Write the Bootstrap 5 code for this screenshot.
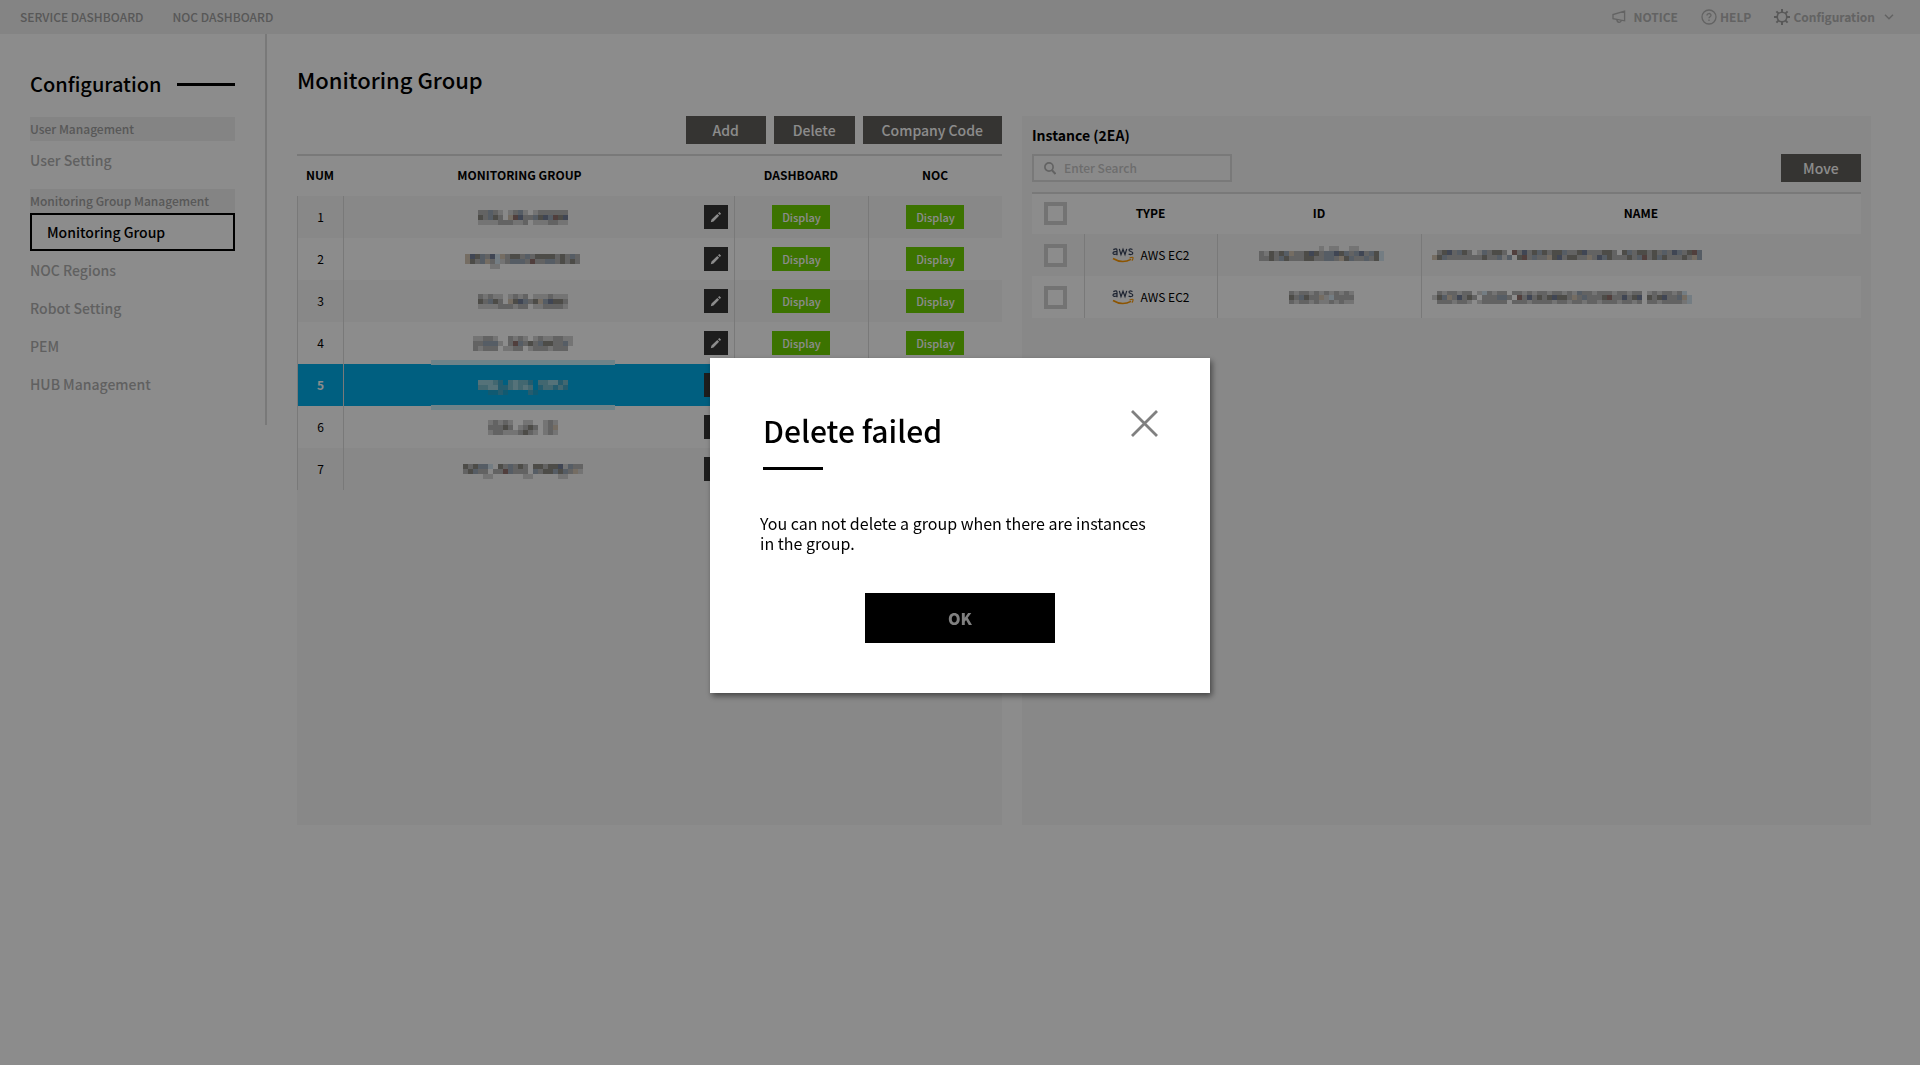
<!DOCTYPE html>
<html lang="en">
<head>
<meta charset="utf-8">
<meta name="viewport" content="width=device-width, initial-scale=1">
<title>Monitoring Group</title>
<link href="https://cdn.jsdelivr.net/npm/bootstrap@5.3.0/dist/css/bootstrap.min.css" rel="stylesheet">
<style>
body{font-family:"Noto Sans CJK KR","Noto Sans",sans-serif;font-size:14px;line-height:20px;font-weight:500;color:#000;background:#fff}
button,input{font-family:inherit}
.topbar{height:34px;background:#f0f0f0;padding:0 26px 0 20px}
.topbar nav{gap:29px}
.topbar a,.topbar button{font-size:12px;line-height:20px;color:#a0a0a0;text-decoration:none;background:none;border:0;padding:0}
.topbar .tools{gap:23px}
.topbar .tools a,.topbar .tools button{color:#b4b4b4;font-weight:700;gap:3px}
.topbar .chevron{margin-left:6px}
.side{flex:0 0 267px;border-right:2px solid #dcdcdc;padding:33px 30px 22px}
.side-title{font-size:20px;line-height:34px;font-weight:500;margin:0}
.side-top{margin-bottom:16px}
.side-rule{height:3px;background:#000;margin-left:15px}
.side-head{font-size:12px;line-height:24px;height:24px;background:#f0f0f0;color:#a0a0a0}
.side-head + .side-link:not(.current){margin-bottom:10px}
.side-link{display:block;height:38px;line-height:38px;font-size:14px;color:#b0b0b0;text-decoration:none}
.side-link.current{border:2px solid #000;line-height:34px;padding-left:15px;color:#000}
.main{padding:28px 49px 0 30px;min-width:0}
.main h1{font-size:22px;line-height:34px;font-weight:500;margin:0 0 20px}
.panes{gap:20px}
.pane-l{flex:0 0 calc((100% - 20px)*.4537)}
.pane-r{flex:1 1 0;min-width:0;background:#f7f7f7;padding:9px 10px 0 10px}
.tool-row{margin-bottom:10px}
.tool-btn{height:28px;min-width:80px;padding:0 19px;border:0;border-radius:0;background:#625f5b;color:#fff;font-size:14px;line-height:28px;font-weight:500}
.fill{background:#f7f7f7;height:671px;border-top:2px solid #dcdcdc}
.grid{width:100%;table-layout:fixed;border-collapse:separate;border-spacing:0}
.grid th{height:40px;padding:0 0 2px;background:#fff;font-size:12px;font-weight:700;text-align:center}
.grid td{height:42px;padding:0;background:#fff;border-left:1px solid #dcdcdc;text-align:center;font-size:12px;font-weight:400}
.grid td.edit-cell{border-left:0}
.grid tbody tr:nth-child(odd) td{background:#f7f7f7}
.grid tbody tr.picked td{background:#00ade9;color:#fff;font-weight:700}
.c-num{width:46px}.c-edit{width:38px}.c-show{width:134px}
.c-tick{width:52px}.c-type{width:133px}.c-id{width:204px}
.list-r{border-top:2px solid #dcdcdc}
.list-r td:first-child{border-left:0}
.list-r td > svg{display:block}
.grid td.value-cell{padding-left:10px}
.grid td.id-cell{padding-left:4px}
.name-box{width:184px;height:42px;margin-left:6px}
.picked .name-box{position:relative}
.picked .name-box::before,.picked .name-box::after{content:"";position:absolute;left:0;width:184px;height:5px;background:#c8eefa}
.picked .name-box::before{top:-4px}
.picked .name-box::after{bottom:-4px}
.edit-btn{width:24px;height:24px;border:0;padding:0;background:#363636;margin-left:8px;display:flex;align-items:center;justify-content:center}
.show-btn{width:58px;height:24px;border:0;padding:0;background:#6dd100;color:#fff;font-size:11px;line-height:24px;font-weight:500;display:block;margin:0 auto}
.pane-r h2{font-size:14px;line-height:20px;font-weight:700;margin:0 0 9px}
.search-box{width:200px;height:28px;border:2px solid #dcdcdc;background:#fcfcfc;padding-left:10px}
.search-box input{border:0;background:none;outline:0;font-size:12px;font-weight:500;min-width:0;padding:0}
.search-box input::placeholder{color:#c6c6c6;opacity:1}
.tick{appearance:none;width:23px;height:23px;border:4px solid #d2d2d2;background:#fff;margin:0 0 0 12px;display:block}
.type-cell{gap:6px}
.modal{--bs-modal-margin:0px;--bs-modal-width:500px;padding-bottom:14px}
.modal-backdrop{--bs-backdrop-opacity:.45}
.modal-content{border:0;border-radius:0;padding:49px 50px 50px;color:#000;box-shadow:2px 3px 6px rgba(0,0,0,.5)}
.modal-title{font-size:30px;line-height:46px;font-weight:500;margin-left:3px}
.title-rule{width:60px;height:3px;background:#000;margin:14px 0 0 3px}
.modal p{font-size:16px;line-height:20px;font-weight:400;margin:43px 0 40px}
.close-btn{border:0;background:none;padding:0;margin:3px 2px 0 0;line-height:0}
.ok-btn{width:190px;height:50px;border:0;background:#000;color:#808080;font-size:16px;font-weight:900}
</style>
</head>
<body>
<header class="topbar d-flex align-items-center justify-content-between">
  <nav class="d-flex"><a href="#">SERVICE DASHBOARD</a><a href="#">NOC DASHBOARD</a></nav>
  <div class="tools d-flex align-items-center">
    <a href="#" class="d-flex align-items-center"><svg class="me-1" width="14" height="14" viewBox="0 0 14 14" fill="none" stroke="#b4b4b4" stroke-width="1.3"><path d="M12.600 1.200v9.600L1 8.600V4.600zM4.800 9.400c.2 3.600 4.200 3.800 4.400.8"/></svg>NOTICE</a>
    <a href="#" class="d-flex align-items-center"><svg width="16" height="16" viewBox="0 0 16 16" fill="none" stroke="#b4b4b4" stroke-width="1.3"><circle cx="8" cy="8" r="7"/><path d="M6 6.500c0-2.600 4-2.600 4-.2 0 1.500-2 1.500-2 3M8 10.500v1.400"/></svg><span>HELP</span></a>
    <button type="button" class="d-flex align-items-center"><svg width="16" height="16" viewBox="0 0 16 16" fill="none" stroke="#a0a0a0"><circle cx="8" cy="8" r="4.800" stroke-width="1.600"/><path stroke-width="2" d="M8 0v3M8 13v3M0 8h3M13 8h3M2.400 2.400l2 2M11.600 11.600l2 2M13.600 2.400l-2 2M4.400 11.600l-2 2"/></svg>Configuration<svg class="chevron" width="10" height="6" viewBox="0 0 10 6" fill="none" stroke="#b4b4b4" stroke-width="1.500"><path d="M1 .7l4 4 4-4"/></svg></button>
  </div>
</header>
<div class="d-flex align-items-start">
  <aside class="side">
    <div class="side-top d-flex align-items-center"><h2 class="side-title">Configuration</h2><div class="side-rule flex-grow-1"></div></div>
    <div class="side-head">User Management</div>
    <a class="side-link" href="#">User Setting</a>
    <div class="side-head">Monitoring Group Management</div>
    <a class="side-link current" href="#" aria-current="page">Monitoring Group</a>
    <a class="side-link" href="#">NOC Regions</a>
    <a class="side-link" href="#">Robot Setting</a>
    <a class="side-link" href="#">PEM</a>
    <a class="side-link" href="#">HUB Management</a>
  </aside>
  <main class="main flex-grow-1">
    <h1>Monitoring Group</h1>
    <div class="panes d-flex">
      <section class="pane-l">
        <div class="tool-row d-flex justify-content-end gap-2">
          <button type="button" class="tool-btn">Add</button>
          <button type="button" class="tool-btn">Delete</button>
          <button type="button" class="tool-btn">Company Code</button>
        </div>
        <div class="fill">
          <table class="grid">
            <colgroup><col class="c-num"><col><col class="c-edit"><col class="c-show"><col class="c-show"></colgroup>
            <thead><tr><th>NUM</th><th>MONITORING GROUP</th><th></th><th>DASHBOARD</th><th>NOC</th></tr></thead>
            <tbody id="groups"></tbody>
          </table>
        </div>
      </section>
      <section class="pane-r">
        <h2>Instance (2EA)</h2>
        <div class="tool-row d-flex justify-content-between">
          <label class="search-box d-flex align-items-center"><svg class="flex-shrink-0 me-2" width="12" height="13" viewBox="0 0 12 13" fill="none" stroke="#b4b4b4" stroke-width="1.700"><circle cx="5" cy="5" r="4.100"/><path d="M8 8.300l3.500 3.700" stroke-width="2"/></svg><input type="search" placeholder="Enter Search" aria-label="Enter Search"></label>
          <button type="button" class="tool-btn">Move</button>
        </div>
        <div class="list-r">
        <table class="grid">
          <colgroup><col class="c-tick"><col class="c-type"><col class="c-id"><col></colgroup>
          <thead><tr><th><input type="checkbox" class="tick" aria-label="Select all"></th><th>TYPE</th><th>ID</th><th>NAME</th></tr></thead>
          <tbody id="instances"></tbody>
        </table>
        </div>
      </section>
    </div>
  </main>
</div>

<div class="modal-backdrop show"></div>
<div class="modal d-block" role="dialog" aria-modal="true" aria-labelledby="dlgTitle">
  <div class="modal-dialog modal-dialog-centered">
    <div class="modal-content">
      <div class="d-flex justify-content-between align-items-start">
        <h2 class="modal-title" id="dlgTitle">Delete failed</h2>
        <button type="button" class="close-btn" aria-label="Close"><svg width="27" height="27" viewBox="0 0 27 27" stroke="#808080" stroke-width="2.800"><path d="M1 1l25 25M26 1L1 26"/></svg></button>
      </div>
      <div class="title-rule"></div>
      <p>You can not delete a group when there are instances in the group.</p>
      <button type="button" class="ok-btn mx-auto">OK</button>
    </div>
  </div>
</div>

<script src="https://cdn.jsdelivr.net/npm/bootstrap@5.3.0/dist/js/bootstrap.bundle.min.js"></script>
<script>
// Masked values: one letter per 5px block, "." leaves the block empty.
const tint = {a:'#8c8a84', b:'#b4b4b4', c:'#d4d4d4', d:'#9daab8', e:'#d6c6b4', f:'#76809a', g:'#d4e4ee', h:'#947470',
  w:'#9cd0dc', x:'#78bccc', y:'#44a8c8', z:'#1ca4d0'};
function mask(rows, heights, cls = '') {
  const w = Math.max(...rows.map(r => r.length)) * 5;
  let y = 0, out = '';
  rows.forEach((r, j) => {
    const h = heights ? heights[j] : 5;
    [...r].forEach((k, i) => { if (tint[k]) out += `<rect x="${i*5}" y="${y}" width="5" height="${h}" fill="${tint[k]}"/>`; });
    y += h;
  });
  return `<svg class="${cls}" aria-hidden="true" shape-rendering="crispEdges" width="${w}" height="${y}" viewBox="0 0 ${w} ${y}">${out}</svg>`;
}
const groups = [
  ['bbdbc.cbdc.cbbbbbb','abdab.ehfbbdafdhaf','ccccbbbccb.cccbbcc'],
  ['.......................','efadbfgebaabdbaaaababdb','eabdebgcbdddbhbbddbabab','.....cc................'],
  ['bcbcc.cbcb.cccbccc','abdab.eafdbaedfaab','ccccbbbcbb.ccbbbbc'],
  ['ccbbc..bcbc.cbccbbcc','bbdddc.bhdbabdaabbdc','bcbbb.ccbb.cbbbcbbb.'],
  ['..................','wwwxy.xwxxy.xxwwyx','xxwwyyxwxwx.yxxyxy','..zzyz....yz......'],
  ['cbcbc..cc..cbc','bbbab.cbab.cbe','cbbcccbabc.cbc'],
  ['........................','abaddg.abdbab.aabaafcdbb','badbb.bbhdbbb.dbaadadbec','....cc......cc.....cc...']
];
const pencil = '<svg width="12" height="12" viewBox="0 0 12 12" fill="#fff" aria-hidden="true"><path d="M.800 11.200l.700-2.700L7.300 2.900l1.800 1.800L3.500 10.500zM8 2.200l1.300-1.300 1.800 1.800L9.800 4z"/></svg>';
document.getElementById('groups').innerHTML = groups.map((g, i) => `<tr${i === 4 ? ' class="picked"' : ''}><td>${i + 1}</td>
<td><div class="d-flex justify-content-center"><div class="name-box d-flex align-items-center justify-content-center">${mask(g)}</div></div></td>
<td class="edit-cell"><button type="button" class="edit-btn" aria-label="Edit group ${i + 1}">${pencil}</button></td>
<td><button type="button" class="show-btn">Display</button></td><td><button type="button" class="show-btn">Display</button></td></tr>`).join('');

const aws = '<svg width="22" height="16" viewBox="0 0 22 16" fill="none" aria-hidden="true"><g stroke="#35415a" stroke-width="1.200"><path d="M1.300 2.600Q5 .8 5 3.200V8.200M5 4.800Q1 4.300 1 6.300 1.600 8.400 5 6.700M7.300 1.800l1.700 5.800 2-5.400 2 5.400 1.700-5.800M20.500 2.500Q17 1.200 17 3c0 1.700 3.800 1.200 3.800 3 0 2-3.200 1.700-4.200 1"/></g><path d="M1 11.500q9 5.500 18 .9" stroke="#ff9900" stroke-width="1.600"/><path d="M17.500 10.900q3.500-1.200 3.600-.2 0 1.600-1.200 3" stroke="#ff9900" stroke-width="1.100"/></svg>';
const instances = [
  [mask(['............c.cc..cc.....','bcabadebbafabddfadbdfbdag','bbabdabbbaabbddbeadbbdbag','.'],[5,5,5,3],'mx-auto'),
   mask(['.bafbdab.cdbaab.hbfbadabaadbbafbbbaab.adbaababdbfdbahd','eadbbbbbbbabbdcd.ahbdbbeafbaabbebfdabbbabdhbadabbbabed'],[5,5])],
  [mask(['bcbbcbcbcbcbc','abdabbecgbbbb','bcbbcbccbcbcc'],[4,5,4],'mx-auto'),
   mask(['.bcbbcbb.cgbcbb.bbcbcbbcbbcbcdbbcbbbcbbcbb.cbcbbcbg','cadebfbab.bbbddb.hbfbabafaabebdbbbahbbfbaf.abafbbdeg','.bbbcbbc.cbbbbb.bbbcbbbbcbbcbbcbbcbbbcbbcb.bbcbbbbcg'],[4,5,4])]
];
document.getElementById('instances').innerHTML = instances.map((r, i) => `<tr><td><input type="checkbox" class="tick" aria-label="Select instance ${i + 1}"></td>
<td><div class="type-cell d-flex align-items-center justify-content-center">${aws}<span>AWS EC2</span></div></td><td class="id-cell">${r[0]}</td><td class="value-cell">${r[1]}</td></tr>`).join('');
</script>
</body>
</html>
